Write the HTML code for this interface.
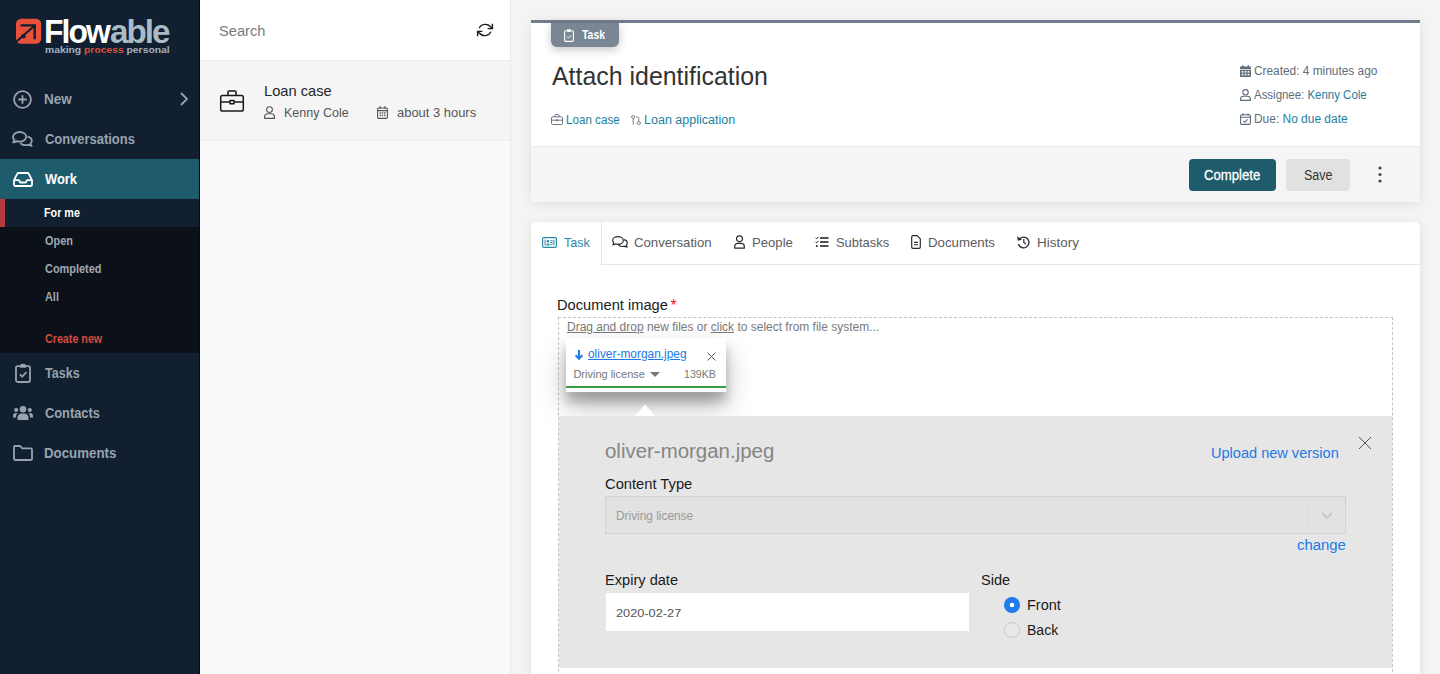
<!DOCTYPE html>
<html lang="en">
<head>
<meta charset="utf-8">
<title>Flowable Work</title>
<style>
*{box-sizing:border-box;margin:0;padding:0}
html,body{width:1440px;height:674px;overflow:hidden}
body{position:relative;background:#f5f4f2;font-family:"Liberation Sans",sans-serif;color:#222}
.abs{position:absolute}
svg{display:block;overflow:visible}
/* sidebar */
#side{position:absolute;left:0;top:0;width:200px;height:674px;background:#111f30;border-right:1px solid #070b15}
#side .nav{position:absolute;left:0;width:199px;height:40px}
#side .nav .lbl{transform-origin:0 50%;position:absolute;left:45px;top:0;line-height:40px;font-size:14px;font-weight:bold;color:#97a3af;white-space:nowrap}
#side .nav svg{position:absolute}
#side .sub{transform-origin:0 50%;position:absolute;left:45px;font-size:12px;font-weight:bold;color:#9fa9b3;line-height:28px;white-space:nowrap}
/* list */
#list{position:absolute;left:200px;top:0;width:311px;height:674px;background:#fafafa;border-right:1px solid #e3e9ec}
#list .search{position:absolute;left:0;top:0;width:310px;height:61px;background:#fff;border-bottom:1px solid #ececec}
#list .item{position:absolute;left:0;top:61px;width:310px;height:80px;background:#f5f5f5;border-bottom:1px solid #ececec}
/* main */
.card{position:absolute;left:531px;width:889px;background:#fff;border-radius:3px}
.t{position:absolute;white-space:nowrap;transform-origin:0 50%}
.lg{font-size:33px;line-height:36px;font-weight:bold;letter-spacing:-2px}
.lk{font-size:12px;line-height:16px;color:#1b7f9e}
.lkc{color:#1b7f9e}
.mt{font-size:12px;line-height:16px;color:#5f6c7a}
.tb{top:234px;font-size:13px;line-height:18px;color:#5c5c5c}
</style>
</head>
<body>

<!-- ================= SIDEBAR ================= -->
<div id="side">
  <!-- logo -->
  <svg class="abs" style="left:15px;top:18px" width="28" height="28" viewBox="0 0 28 28">
    <rect x="1" y=".8" width="25.200" height="25" rx="5.200" fill="#e8503a"/>
    <g fill="none" stroke="#111f30" stroke-width="2.400" stroke-linecap="round"><path d="M6.500 7.400H19.700V20.200"/><path d="M19.700 7.400L.3 24.600" stroke-linecap="butt" stroke-width="2"/></g>
    <circle cx="8.400" cy="18.300" r="2.300" fill="#111f30"/>
  </svg>
  <div class="t m lg" id="lg1" style="transform:scaleX(0.967);left:43.7px;top:14px;color:#fff">Flow</div>
  <div class="t m lg" id="lg1b" style="transform:scaleX(1.007);left:109.6px;top:14px;color:#a9bcc6">able</div>
  <div class="t m" id="lg2" style="transform:scaleX(1.148);left:44.5px;top:44px;font-size:9px;font-weight:bold;line-height:12px;color:#a3b3be">making <span style="color:#d8503f">process</span> personal</div>

  <div class="nav" style="top:79px">
    <svg style="left:13px;top:11px" width="19" height="19" viewBox="0 0 19 19"><circle cx="9.5" cy="9.5" r="8.4" fill="none" stroke="#97a3af" stroke-width="1.800"/><path d="M9.5 5.3v8.4M5.3 9.5h8.4" stroke="#97a3af" stroke-width="1.800" fill="none"/></svg>
    <div class="lbl m" id="n1" style="transform:scaleX(0.966);left:44.0px;">New</div>
    <svg style="left:180px;top:13px" width="8" height="14" viewBox="0 0 8 14"><path d="M1 1l6 6-6 6" fill="none" stroke="#97a3af" stroke-width="1.800"/></svg>
  </div>
  <div class="nav" style="top:119px">
    <svg style="left:12px;top:12px" width="21" height="17" viewBox="0 0 21 17"><path d="M7.6 1C4 1 1 3.200 1 5.900c0 1.200.6 2.300 1.500 3.100-.2.900-.8 1.700-1.400 2.300 1.300 0 2.600-.5 3.500-1.100.9.300 1.900.5 3 .5 3.600 0 6.600-2.200 6.600-4.900S11.200 1 7.600 1z" fill="none" stroke="#97a3af" stroke-width="1.800" stroke-linejoin="round"/><path d="M15.600 5.600c2.400.5 4.200 2.200 4.200 4.200 0 1.100-.5 2.100-1.400 2.900.2.800.7 1.500 1.300 2.100-1.200 0-2.400-.4-3.300-1-.8.300-1.700.400-2.700.400-2.300 0-4.300-.9-5.300-2.300" fill="none" stroke="#97a3af" stroke-width="1.800" stroke-linejoin="round"/></svg>
    <div class="lbl m" id="n2" style="transform:scaleX(0.924);left:44.6px;">Conversations</div>
  </div>
  <div class="nav" style="top:159px;background:#1e5b6d">
    <svg style="left:13px;top:13px" width="20" height="15" viewBox="0 0 20 15"><path d="M1 8.200L4.200 1.800c.2-.5.700-.8 1.200-.8h9.200c.5 0 1 .3 1.200.8L19 8.200v4.600c0 .7-.6 1.200-1.300 1.200H2.300C1.600 14 1 13.500 1 12.800z" fill="none" stroke="#fff" stroke-width="1.800" stroke-linejoin="round"/><path d="M1 8.200h5l1.300 2.300h5.400L14 8.200h5" fill="none" stroke="#fff" stroke-width="1.800" stroke-linejoin="round"/></svg>
    <div class="lbl m" id="n3" style="transform:scaleX(0.922);left:45.0px;color:#fff">Work</div>
  </div>
  <!-- submenu -->
  <div class="abs" style="left:0;top:199px;width:199px;height:154px;background:#0c1019"></div>
  <div class="abs" style="left:0;top:199px;width:199px;height:28px;background:#111f30"></div>
  <div class="abs" style="left:0;top:199px;width:5px;height:28px;background:#b5393f"></div>
  <div class="sub m" id="s1" style="transform:scaleX(0.897);left:44.4px;top:199px;color:#fff">For me</div>
  <div class="sub m" id="s2" style="transform:scaleX(0.908);left:44.6px;top:227px">Open</div>
  <div class="sub m" id="s3" style="transform:scaleX(0.911);left:44.6px;top:255px">Completed</div>
  <div class="sub m" id="s4" style="transform:scaleX(0.907);left:44.7px;top:283px">All</div>
  <div class="sub m" id="s5" style="transform:scaleX(0.893);left:44.5px;top:325px;color:#d34b3f">Create new</div>

  <div class="nav" style="top:353px">
    <svg style="left:15px;top:10px" width="16" height="20" viewBox="0 0 16 20"><rect x="1" y="3.200" width="14" height="15.800" rx="1.800" fill="none" stroke="#97a3af" stroke-width="1.800"/><path d="M5 3.200c0-1 .4-2.400 3-2.400s3 1.400 3 2.400v1.600H5z" fill="#97a3af"/><path d="M4.800 11.400l2.300 2.300 4.300-4.500" fill="none" stroke="#97a3af" stroke-width="1.700"/></svg>
    <div class="lbl m" id="n4" style="transform:scaleX(0.895);left:45.0px;">Tasks</div>
  </div>
  <div class="nav" style="top:393px">
    <svg style="left:13px;top:13px" width="20" height="14" viewBox="0 0 20 14"><g fill="#97a3af"><circle cx="10" cy="3.300" r="3.300"/><circle cx="3.200" cy="4" r="2.100"/><circle cx="16.800" cy="4" r="2.100"/><path d="M4.500 14v-2.400c0-2.300 1.800-4 4-4h3c2.200 0 4 1.700 4 4V14z"/><path d="M0 11.500V9.800C0 8.200 1.200 7 2.800 7h1.700c-.9 1-1.400 2.200-1.400 3.600v.9zM20 11.500V9.800C20 8.200 18.800 7 17.200 7h-1.700c.9 1 1.400 2.200 1.400 3.600v.9z"/></g></svg>
    <div class="lbl m" id="n5" style="transform:scaleX(0.915);left:44.6px;">Contacts</div>
  </div>
  <div class="nav" style="top:433px">
    <svg style="left:13px;top:12px" width="20" height="16" viewBox="0 0 20 16"><path d="M1 2.200C1 1.500 1.500 1 2.200 1h5l2 2.300h8.600c.7 0 1.200.5 1.200 1.200v9.300c0 .7-.5 1.200-1.200 1.200H2.200c-.7 0-1.200-.5-1.200-1.200z" fill="none" stroke="#97a3af" stroke-width="1.800" stroke-linejoin="round"/></svg>
    <div class="lbl m" id="n6" style="transform:scaleX(0.949);left:44.1px;">Documents</div>
  </div>
</div>

<!-- ================= LIST ================= -->
<div id="list">
  <div class="search">
    <div class="t m" id="l1" style="transform:scaleX(1.046);left:18.9px;top:21px;font-size:14px;line-height:20px;color:#7a7a7a">Search</div>
    <svg class="abs" style="left:277px;top:23px" width="16" height="14" viewBox="0 0 16 14"><g fill="none" stroke="#1a1a1a" stroke-width="1.300"><path d="M2.300 5.200A6.200 5.400 0 0 1 13.800 4.400"/><path d="M13.700 8.800A6.200 5.400 0 0 1 2.200 9.600"/><path d="M15.400.8v4.800h-4.800" stroke-width="1.400"/><path d="M.6 13.200V8.400h4.800" stroke-width="1.400"/><path d="M15.400 2.800v2.800h-2.800z" fill="#1a1a1a" stroke="none"/><path d="M.6 11.200V8.400h2.800z" fill="#1a1a1a" stroke="none"/></g></svg>
  </div>
  <div class="item">
    <svg class="abs" style="left:20px;top:29px" width="24" height="22" viewBox="0 0 24 22"><g fill="none" stroke="#1a1a1a" stroke-width="1.500" stroke-linejoin="round"><rect x="0.700" y="5.500" width="22.600" height="15.500" rx="1.800"/><path d="M8 5.500V2c0-.6.400-1 1-1h6c.6 0 1 .4 1 1v3.500"/><path d="M0.700 12h9.300M14 12h9.300"/><rect x="10" y="10.600" width="4" height="3.200"/></g></svg>
    <div class="t m" id="l2" style="transform:scaleX(0.979);left:64.3px;top:20px;font-size:15px;line-height:20px;color:#262626">Loan case</div>
    <svg class="abs" style="left:64px;top:45px" width="11" height="13" viewBox="0 0 11 13"><g fill="none" stroke="#555" stroke-width="1.100"><circle cx="5.500" cy="3.600" r="2.900"/><path d="M.6 12.400v-1.600C.6 9 2 7.800 3.600 7.800h3.800C9 7.800 10.400 9 10.400 10.800v1.600z" stroke-linejoin="round"/></g></svg>
    <div class="t m" id="l3" style="transform:scaleX(0.962);left:83.8px;top:43px;font-size:13px;line-height:18px;color:#555">Kenny Cole</div>
    <svg class="abs" style="left:177px;top:45px" width="11" height="13" viewBox="0 0 11 13"><g fill="none" stroke="#555" stroke-width="1.100"><rect x=".6" y="2" width="9.800" height="10.400" rx="1.200"/><path d="M.6 4.600h9.800M3 .3v2.400M8 .3v2.400" stroke-width="1.300"/></g><g fill="#555"><rect x="2.600" y="6.300" width="1.400" height="1.400"/><rect x="4.800" y="6.300" width="1.400" height="1.400"/><rect x="7" y="6.300" width="1.400" height="1.400"/><rect x="2.600" y="8.700" width="1.400" height="1.400"/><rect x="4.800" y="8.700" width="1.400" height="1.400"/><rect x="7" y="8.700" width="1.400" height="1.400"/></g></svg>
    <div class="t m" id="l4" style="transform:scaleX(0.995);left:196.9px;top:43px;font-size:13px;line-height:18px;color:#555">about 3 hours</div>
  </div>
</div>

<!-- ================= MAIN ================= -->
<div id="main">
  <!-- header card -->
  <div class="card" id="hdr" style="top:20px;height:182px;box-shadow:0 2px 12px rgba(0,0,0,.09);overflow:hidden;border-radius:0 0 4px 4px">
    <div class="abs" style="left:0;top:0;width:889px;height:3px;background:#707d8e"></div>
    <div class="abs" style="left:0;top:126px;width:889px;height:56px;background:#f5f5f5;border-top:1px solid #ebebeb"></div>
  </div>
  <!-- badge -->
  <div class="abs" style="left:551px;top:23px;width:68px;height:24px;background:#7a8693;border-radius:0 0 6px 6px;box-shadow:0 3px 8px rgba(0,0,0,.22)"></div>
  <svg class="abs" style="left:564px;top:29px" width="10" height="13" viewBox="0 0 10 13"><rect x=".6" y="1.800" width="8.800" height="10.600" rx="1.200" fill="none" stroke="#fff" stroke-width="1.100"/><rect x="3" y=".3" width="4" height="2.600" rx=".8" fill="#fff"/><path d="M3 7.600l1.500 1.500L7.200 6.200" fill="none" stroke="#fff" stroke-width="1"/></svg>
  <div class="t m" id="bdg" style="transform:scaleX(0.872);left:582.0px;top:27px;font-size:12px;line-height:16px;color:#fff;font-weight:bold">Task</div>

  <div class="t m" id="ttl" style="transform:scaleX(0.996);left:551.5px;top:60px;font-size:25px;line-height:32px;color:#333">Attach identification</div>

  <svg class="abs" style="left:551px;top:114px" width="12" height="11" viewBox="0 0 12 11"><g fill="none" stroke="#6a7785" stroke-width="1"><rect x=".5" y="2.800" width="11" height="7.700" rx="1.200"/><path d="M4 2.800V1.300c0-.4.300-.8.800-.8h2.400c.5 0 .8.400.8.800v1.500M.5 6.200h11"/></g><rect x="5" y="5.400" width="2" height="1.800" fill="#6a7785"/></svg>
  <div class="t m lk" id="lk1" style="transform:scaleX(0.969);left:565.6px;top:112px">Loan case</div>
  <svg class="abs" style="left:631px;top:115px" width="10" height="10" viewBox="0 0 10 12" preserveAspectRatio="none"><g fill="none" stroke="#6a7785" stroke-width="1"><circle cx="2.200" cy="2.300" r="1.700"/><circle cx="7.800" cy="9.600" r="1.700"/><path d="M2.200 4v7.500M5 2.300h1.300c.8 0 1.500.7 1.500 1.500v4"/></g></svg>
  <div class="t m lk" id="lk2" style="transform:scaleX(1.044);left:644.3px;top:112px">Loan application</div>

  <!-- meta -->
  <svg class="abs" style="left:1240px;top:65px" width="11" height="12" viewBox="0 0 11 12"><path d="M0 2.500C0 1.900.5 1.500 1 1.500h1V.2h1.500v1.300h4V.2H9v1.300h1c.6 0 1 .5 1 1V4H0zM0 4.800h11V11c0 .6-.5 1-1 1H1c-.6 0-1-.5-1-1z" fill="#5f6c7a"/><g fill="#fff"><rect x="1.600" y="6" width="1.800" height="1.600"/><rect x="4.600" y="6" width="1.800" height="1.600"/><rect x="7.600" y="6" width="1.800" height="1.600"/><rect x="1.600" y="8.800" width="1.800" height="1.600"/><rect x="4.600" y="8.800" width="1.800" height="1.600"/><rect x="7.600" y="8.800" width="1.800" height="1.600"/></g></svg>
  <div class="t m mt" id="mt1" style="transform:scaleX(0.989);left:1253.8px;top:63px">Created: 4 minutes ago</div>
  <svg class="abs" style="left:1240px;top:89px" width="11" height="12" viewBox="0 0 11 12"><g fill="none" stroke="#5f6c7a" stroke-width="1.100"><circle cx="5.500" cy="3.300" r="2.700"/><path d="M.6 11.400v-1.300C.6 8.500 1.800 7.300 3.400 7.300h4.200c1.600 0 2.800 1.200 2.800 2.800v1.300z" stroke-linejoin="round"/></g></svg>
  <div class="t m mt" id="mt2" style="transform:scaleX(0.954);left:1254.2px;top:87px">Assignee: <span class="lkc">Kenny Cole</span></div>
  <svg class="abs" style="left:1240px;top:113px" width="11" height="12" viewBox="0 0 11 12"><g fill="none" stroke="#5f6c7a" stroke-width="1.100"><rect x=".6" y="1.800" width="9.800" height="9.600" rx="1.200"/><path d="M.6 4.200h9.800M3 .2v2.200M8 .2v2.200M3.400 7.800l1.500 1.400 2.700-2.800"/></g></svg>
  <div class="t m mt" id="mt3" style="transform:scaleX(0.995);left:1253.5px;top:111px">Due: <span class="lkc">No due date</span></div>

  <!-- buttons -->
  <div class="abs" style="left:1189px;top:159px;width:87px;height:32px;background:#1e5b6c;border-radius:4px"></div>
  <div class="t m" id="bt1" style="transform:scaleX(0.939);left:1204.2px;top:165px;font-size:14px;line-height:20px;color:#fff;-webkit-text-stroke:.3px #fff">Complete</div>
  <div class="abs" style="left:1286px;top:159px;width:64px;height:32px;background:#e1e1e1;border-radius:4px"></div>
  <div class="t m" id="bt2" style="transform:scaleX(0.895);left:1303.9px;top:165px;font-size:14px;line-height:20px;color:#333">Save</div>
  <svg class="abs" style="left:1378px;top:166px" width="4" height="17" viewBox="0 0 4 17"><g fill="#3a4a5a"><circle cx="2" cy="2" r="1.600"/><circle cx="2" cy="8.500" r="1.600"/><circle cx="2" cy="15" r="1.600"/></g></svg>

  <!-- tabs card -->
  <div class="card" id="body" style="top:222px;height:470px;box-shadow:0 2px 12px rgba(0,0,0,.09);border-radius:5px 5px 0 0">
    <div class="abs" style="left:70px;top:0;width:819px;height:43px;border-bottom:1px solid #e6e6e6;border-left:1px solid #e6e6e6"></div>
  </div>
  <svg class="abs" style="left:542px;top:237px" width="15" height="11" viewBox="0 0 15 11"><g fill="none" stroke="#2b8aa8" stroke-width="1.200"><rect x=".6" y=".6" width="13.800" height="9.800" rx="1.200"/></g><g fill="#2b8aa8"><rect x="2.600" y="2.600" width="1" height="5.800"/><rect x="11.400" y="2.600" width="1" height="5.800"/><circle cx="6" cy="4.300" r="1.300"/><path d="M4.300 8.400c0-1.300.7-2 1.700-2s1.700.7 1.700 2z"/><rect x="8.400" y="3.200" width="2.200" height="1"/><rect x="8.400" y="5" width="2.200" height="1"/><rect x="8.400" y="6.800" width="2.200" height="1"/></g></svg>
  <div class="t m tb" id="tb1" style="transform:scaleX(0.962);left:564.3px;color:#2b8aa8">Task</div>
  <svg class="abs" style="left:612px;top:236px" width="16" height="13" viewBox="0 0 16 13"><g fill="none" stroke="#2a2a2a" stroke-width="1.200" stroke-linejoin="round"><path d="M6 .7C3 .7.7 2.400.7 4.600c0 .9.400 1.800 1.100 2.400-.1.700-.5 1.300-1 1.800 1 0 2-.3 2.700-.9.800.3 1.600.4 2.500.4 3 0 5.300-1.700 5.300-3.800S9 .7 6 .7z"/><path d="M11.800 3.700c2 .4 3.500 1.700 3.500 3.300 0 .9-.4 1.600-1.100 2.300.2.600.5 1.200 1 1.700-1 0-1.900-.3-2.600-.8-.7.200-1.400.3-2.100.3-1.800 0-3.400-.7-4.200-1.800"/></g></svg>
  <div class="t m tb" id="tb2" style="transform:scaleX(1.014);left:633.8px">Conversation</div>
  <svg class="abs" style="left:734px;top:235px" width="11" height="14" viewBox="0 0 11 14"><g fill="none" stroke="#2a2a2a" stroke-width="1.200"><circle cx="5.500" cy="3.800" r="3"/><path d="M.7 13.200v-1.800c0-1.700 1.300-3 3-3h3.600c1.700 0 3 1.300 3 3v1.800z" stroke-linejoin="round"/></g></svg>
  <div class="t m tb" id="tb3" style="transform:scaleX(1.009);left:752.4px">People</div>
  <svg class="abs" style="left:815px;top:236px" width="14" height="12" viewBox="0 0 14 12"><g fill="none" stroke="#1a1a1a" stroke-width="1.600"><path d="M5 2h8.500M5 6h8.500M5 10h8.500"/><path d="M.5 1.800l1 1L3.300.8M.5 5.800l1 1 1.800-2" stroke-width="1"/></g><circle cx="1.800" cy="10" r="1" fill="#2a2a2a"/></svg>
  <div class="t m tb" id="tb4" style="transform:scaleX(0.994);left:835.5px">Subtasks</div>
  <svg class="abs" style="left:911px;top:235px" width="10" height="14" viewBox="0 0 10 14"><g fill="none" stroke="#2a2a2a" stroke-width="1.200" stroke-linejoin="round"><path d="M.7 2c0-.7.600-1.300 1.300-1.300h4.200l3.100 3.100V12c0 .7-.6 1.300-1.300 1.300H2c-.7 0-1.300-.6-1.300-1.300z"/><path d="M3 7.400h4M3 9.800h4" stroke-width="1.100"/></g></svg>
  <div class="t m tb" id="tb5" style="transform:scaleX(1.019);left:928.0px">Documents</div>
  <svg class="abs" style="left:1017px;top:235px" width="13" height="14" viewBox="0 0 13 14"><g fill="none" stroke="#2a2a2a" stroke-width="1.300"><path d="M2.300 4.200A5.400 5.400 0 1 1 1.400 9"/><path d="M6.800 4v3.400l2 1.500" stroke-width="1.200"/></g><path d="M.2 1.300l.6 4.400 4.200-.9z" fill="#2a2a2a"/></svg>
  <div class="t m tb" id="tb6" style="transform:scaleX(1.035);left:1037.3px">History</div>

  <!-- form -->
  <div class="t m" id="f1" style="transform:scaleX(1.048);left:556.6px;top:295px;font-size:14px;line-height:20px;color:#1a1a1a">Document image</div>
  <div class="t" id="ast" style="left:670.400px;top:295.500px;font-size:16px;line-height:20px;color:#f01822">*</div>
  <div class="abs" id="drop" style="left:558px;top:317px;width:835px;height:380px;border:1px dashed #c4c4c4"></div>
  <div class="t m" id="hint" style="transform:scaleX(0.998);left:567.4px;top:319px;font-size:12px;line-height:16px;color:#7a7a7a"><u>Drag and drop</u> new files or <u>click</u> to select from file system...</div>

  <!-- chip -->
  <div class="abs" id="chip" style="left:566px;top:338px;width:160px;height:54px;background:#fff;box-shadow:0 14px 28px rgba(0,0,0,.25),0 10px 10px rgba(0,0,0,.22)">
    <div class="abs" style="left:0;top:48px;width:160px;height:2px;background:#3d9a3f"></div>
  </div>
  <!-- expanded panel -->
  <div class="abs" id="panel" style="left:559px;top:416px;width:833px;height:252px;background:#e6e6e6"></div>

  <svg class="abs" style="left:635px;top:404px" width="20" height="12" viewBox="0 0 20 12"><path d="M0 12L10 .4 20 12z" fill="#fff"/></svg>
  <svg class="abs" style="left:575.400px;top:350px" width="8" height="10" viewBox="0 0 8 10"><path d="M4 0v8.300M.6 5.200L4 8.700l3.400-3.500" fill="none" stroke="#1a7ae6" stroke-width="2"/></svg>
  <div class="t m" id="c1" style="transform:scaleX(0.992);left:588.0px;top:346px;font-size:12px;line-height:16px;color:#1a7ae6;text-decoration:underline">oliver-morgan.jpeg</div>
  <svg class="abs" style="left:707px;top:352px" width="9" height="9" viewBox="0 0 9 9"><path d="M.5.500l8 8M8.500.5l-8 8" stroke="#555" stroke-width="1" fill="none"/></svg>
  <div class="t m" id="c2" style="transform:scaleX(1.000);left:573.4px;top:367px;font-size:11px;line-height:14px;color:#777">Driving license</div>
  <svg class="abs" style="left:650px;top:372px" width="10" height="5" viewBox="0 0 10 5"><path d="M0 0h10L5 5z" fill="#777"/></svg>
  <div class="t m" id="c3" style="transform:scaleX(0.966);left:684.0px;top:367px;font-size:11px;line-height:14px;color:#777">139KB</div>

  <div class="t m" id="p1" style="transform:scaleX(1.022);left:604.6px;top:439px;font-size:20px;line-height:24px;color:#858585">oliver-morgan.jpeg</div>
  <div class="t m" id="p2" style="transform:scaleX(1.039);left:1211.1px;top:443px;font-size:14px;line-height:20px;color:#1a7ae6">Upload new version</div>
  <svg class="abs" style="left:1359px;top:437px" width="12" height="12" viewBox="0 0 12 12"><path d="M0 0l12 12M12 0L0 12" stroke="#555" stroke-width="1" fill="none"/></svg>
  <div class="t m" id="p3" style="transform:scaleX(1.051);left:605.3px;top:474px;font-size:14px;line-height:20px;color:#1a1a1a">Content Type</div>
  <div class="abs" style="left:605px;top:496px;width:741px;height:38px;background:#e2e2e2;border:1px solid #d2d2d2"></div>
  <div class="abs" style="left:1308px;top:505px;width:1px;height:20px;background:#dadada"></div>
  <svg class="abs" style="left:1321px;top:512px" width="12" height="7" viewBox="0 0 12 7"><path d="M1 1l5 5 5-5" fill="none" stroke="#c6c6c6" stroke-width="1.800"/></svg>
  <div class="t m" id="p4" style="transform:scaleX(0.988);left:616.4px;top:507.600px;font-size:12px;line-height:16px;color:#999">Driving license</div>
  <div class="t m" id="p5" style="transform:scaleX(1.065);left:1297.4px;top:535px;font-size:14px;line-height:20px;color:#1a7ae6">change</div>
  <div class="t m" id="p6" style="transform:scaleX(1.043);left:604.5px;top:570px;font-size:14px;line-height:20px;color:#1a1a1a">Expiry date</div>
  <div class="abs" style="left:606px;top:593px;width:363px;height:38px;background:#fff"></div>
  <div class="t m" id="p7" style="transform:scaleX(1.109);left:615.8px;top:605px;font-size:11.500px;line-height:16px;color:#555">2020-02-27</div>
  <div class="t m" id="p8" style="transform:scaleX(1.040);left:981.1px;top:570px;font-size:14px;line-height:20px;color:#1a1a1a">Side</div>
  <svg class="abs" style="left:1004px;top:597px" width="16" height="16" viewBox="0 0 16 16"><circle cx="8" cy="8" r="8" fill="#1d7cea"/><circle cx="8" cy="8" r="2.300" fill="#fff"/></svg>
  <div class="t m" id="p9" style="transform:scaleX(1.034);left:1026.7px;top:595px;font-size:14px;line-height:20px;color:#1a1a1a">Front</div>
  <svg class="abs" style="left:1004px;top:622px" width="16" height="16" viewBox="0 0 16 16"><circle cx="8" cy="8" r="7.500" fill="#e9e9e9" stroke="#c9c9c9" stroke-width="1"/></svg>
  <div class="t m" id="p10" style="transform:scaleX(1.002);left:1026.7px;top:620px;font-size:14px;line-height:20px;color:#1a1a1a">Back</div>
</div>

</body>
</html>
